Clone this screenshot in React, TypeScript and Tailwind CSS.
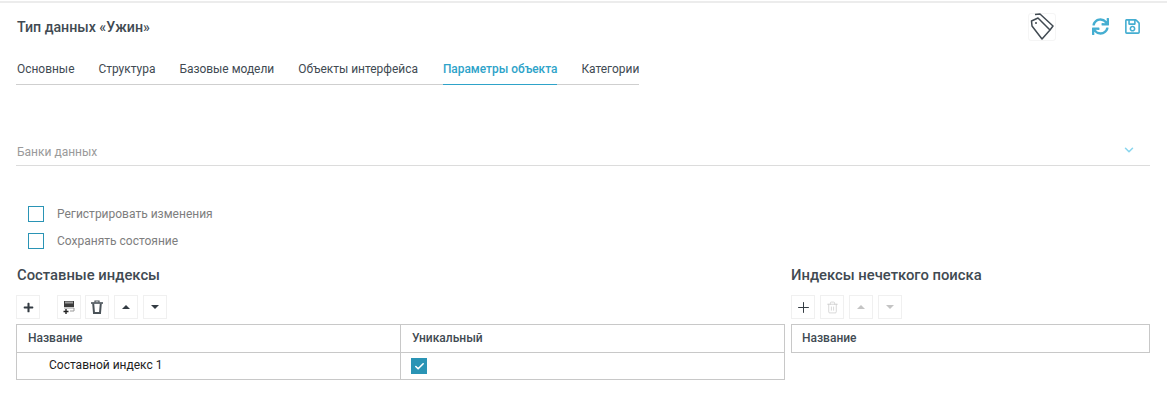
import React from "react";
import { Plus, Trash2, ChevronDown, Check } from "lucide-react";
import { FaSync, FaRegSave, FaPlus } from "react-icons/fa";

const Tri = ({ up, cls }: { up?: boolean; cls: string }) => (
  <svg width="8" height="4" viewBox="0 0 8 4" className={cls}>
    <path d={up ? "M0 4L4 0L8 4Z" : "M0 0L8 0L4 4Z"} fill="currentColor" />
  </svg>
);

const Btn = ({ children, cls = "" }: { children?: React.ReactNode; cls?: string }) => (
  <div className={`w-6 h-6 flex items-center justify-center bg-white border border-[#f0f0f0] ${cls}`}>{children}</div>
);

const tabs = ["Основные", "Структура", "Базовые модели", "Объекты интерфейса", "Параметры объекта", "Категории"];

export default function App() {
  return (
    <div className="w-[1167px] h-[419px] bg-white overflow-hidden text-[#414a52] font-['Roboto',sans-serif]">
      <div className="h-[3px] border-b-2 border-[#ececec] box-border" />
      <div className="pl-[16px] pr-[17px]">
        <div className="h-[47px] flex items-center justify-between">
          <div className="text-[14.2px] leading-[20px] font-medium text-[#414a52] mt-[1px] pl-[1px]">Тип данных «Ужин»</div>
          <div className="flex items-center mr-[9px]">
            <div className="w-7 h-7 flex items-center justify-center border border-[#f5f5f5] rounded-[3px] mr-[36px] mt-[1px]">
              <svg width="24" height="28" viewBox="0 0 24 28" fill="none" stroke="#414a52" strokeWidth="1.5" strokeLinejoin="round">
                <path d="M1.5 8L8 5L20 17L12 26L2 13Z" />
                <path d="M5 1.5L10 1L23 13L20 17" />
                <circle cx="6" cy="10" r="1" fill="#414a52" stroke="none" />
              </svg>
            </div>
            <FaSync size={17} className="text-[#45aed1] mr-[15px]" />
            <FaRegSave size={17} className="text-[#45aed1]" />
          </div>
        </div>
        <div className="w-[623px] h-[35px] flex gap-6 border-b border-[#cfcfcf] text-[11.95px] whitespace-nowrap pl-[1px]">
          {tabs.map((t, i) => (
            <div
              key={t}
              className={
                i === 4
                  ? "h-[35px] pt-[11px] leading-[16px] text-[11.9px] ml-[1px] font-medium text-[#2ea3c9] border-b border-[#2ea3c9]"
                  : "h-[35px] pt-[11px] leading-[16px] text-[#414a52]"
              }
            >
              {t}
            </div>
          ))}
        </div>

        <div className="mt-[55px] w-[1134px] h-[26px] border-b border-[#dcdcdc] flex items-start justify-between pr-[14px]">
          <span className="text-[12px] leading-[24px] text-[#9a9a9a] pl-[1px]">Банки данных</span>
          <ChevronDown size={14} strokeWidth={2.6} className="text-[#8ad6ee] mt-[3px]" />
        </div>

        <div className="mt-[40px] pl-[12px] flex flex-col gap-[11px]">
          <label className="flex items-center h-[16px]">
            <span className="w-4 h-4 border border-[#2a94b5] box-border" />
            <span className="ml-[13px] text-[12px] text-[#7e7e7e]">Регистрировать изменения</span>
          </label>
          <label className="flex items-center h-[16px]">
            <span className="w-4 h-4 border border-[#2a94b5] box-border" />
            <span className="ml-[13px] text-[12px] text-[#7e7e7e]">Сохранять состояние</span>
          </label>
        </div>

        <div className="mt-[16px] flex gap-[6px] items-start">
          <div className="w-[769px] shrink-0">
            <div className="text-[14.8px] leading-[20px] font-medium pl-[1px]">Составные индексы</div>
            <div className="mt-[10px] flex h-6">
              <Btn cls="mr-[17px]"><FaPlus size={11} className="text-[#333b42]" /></Btn>
              <Btn cls="mr-[4px]">
                <svg width="12" height="15" viewBox="0 0 12 15">
                  <path d="M1 1h10v6H1z" fill="#3b3b3b" />
                  <path d="M3 1.5v2M5 1.5v2M7 1.5v2M9 1.5v2" stroke="#fff" strokeWidth="1" />
                  <path d="M1 8h10v3H7" fill="none" stroke="#999" strokeWidth="1" />
                  <path d="M3 9v5M.5 11.5h5" stroke="#222" strokeWidth="1.4" />
                </svg>
              </Btn>
              <Btn cls="mr-[5px]">
                <svg width="12" height="14" viewBox="0 0 12 14" fill="none" stroke="#4a5258">
                  <path d="M0 3h12" strokeWidth="1.6" />
                  <path d="M4 2.5V1h4v1.5" strokeWidth="1.2" />
                  <path d="M2.2 3.5L3 13h6l.8-9.5" strokeWidth="2" />
                </svg>
              </Btn>
              <Btn cls="mr-[5px]"><Tri up cls="text-[#333b42]" /></Btn>
              <Btn><Tri cls="text-[#333b42]" /></Btn>
            </div>
            <div className="mt-[5px] border-x border-t border-[#c8c8c8] grid grid-cols-[384px_1fr] h-[29px] text-[12px] font-medium">
              <div className="pl-[11px] leading-[26px] border-r border-b border-[#c8c8c8]">Название</div>
              <div className="pl-[11px] leading-[26px] border-b border-[#c8c8c8]">Уникальный</div>
            </div>
            <div className="border-x border-b border-[#c8c8c8] grid grid-cols-[384px_1fr] h-[27px] text-[12px]">
              <div className="pl-[32px] leading-[25px] border-r border-[#c8c8c8] text-[#1e1e1e]">Составной индекс 1</div>
              <div className="pl-[10px] pt-[5px]">
                <span className="w-4 h-4 bg-[#2a94b5] flex items-center justify-center">
                  <Check size={11} strokeWidth={3.5} className="text-white" />
                </span>
              </div>
            </div>
          </div>
          <div className="w-[359px] shrink-0">
            <div className="text-[14.8px] leading-[20px] font-medium">Индексы нечеткого поиска</div>
            <div className="mt-[10px] flex h-6 gap-[5px]">
              <Btn><Plus size={17} strokeWidth={1.4} className="text-[#333b42]" /></Btn>
              <Btn><Trash2 size={13} strokeWidth={1.2} className="text-[#c4c4c4]" /></Btn>
              <Btn><Tri up cls="text-[#c4c4c4]" /></Btn>
              <Btn><Tri cls="text-[#c4c4c4]" /></Btn>
            </div>
            <div className="mt-[5px] border border-[#c8c8c8] h-[29px] pl-[10px] text-[12px] font-medium leading-[27px]">Название</div>
          </div>
        </div>
      </div>
    </div>
  );
}
